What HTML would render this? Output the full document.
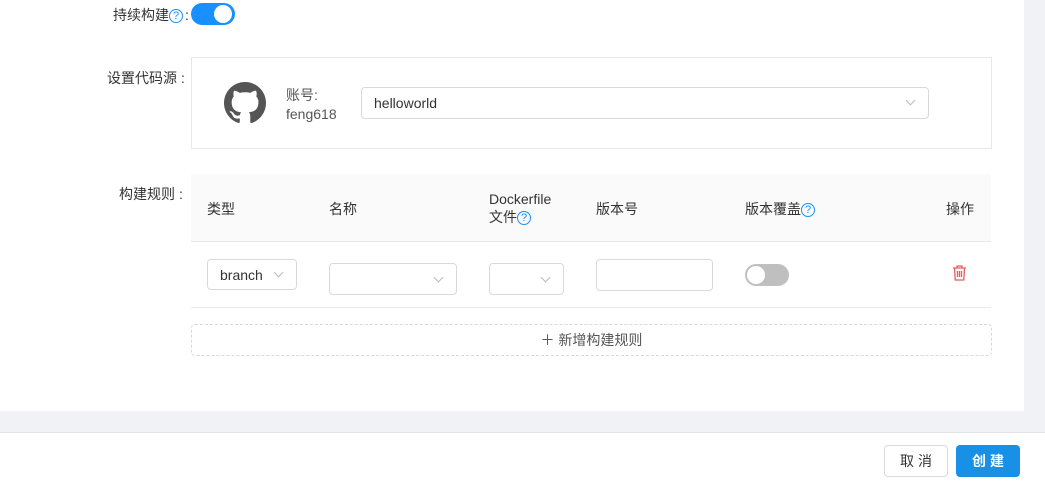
<!DOCTYPE html>
<html><head><meta charset="utf-8"><style>
*{box-sizing:border-box;margin:0;padding:0}
body{width:1045px;height:485px;overflow:hidden;background:#fff;font-family:"Liberation Sans","Noto Sans CJK SC",sans-serif;font-size:14px;color:#333;position:relative}
.a{position:absolute}
.grey{background:#f0f2f5}
.lbl{font-size:14px;color:#333}
.q{display:inline-block;width:14px;height:14px;border:1px solid #1890ff;border-radius:50%;color:#1890ff;font-size:11px;line-height:12px;text-align:center;vertical-align:1px}
.sel{border:1px solid #d9d9d9;border-radius:4px;background:#fff}
.chev{position:absolute;width:7px;height:7px;border-right:1px solid #bbb;border-bottom:1px solid #bbb;transform:rotate(45deg)}
.c{margin-left:4px}
</style></head><body>
<div class="a grey" style="left:1024px;top:0;width:21px;height:432px"></div>
<div class="a grey" style="left:0;top:411px;width:1045px;height:21px"></div>
<div class="a" style="left:0;top:432px;width:1045px;height:1px;background:#e4e4e4"></div>

<div class="a lbl" style="left:113px;top:5px">持续构建<span class="q">?</span><span style="margin-left:2px">:</span></div>
<div class="a" style="left:191px;top:3px;width:44px;height:22px;border-radius:11px;background:#1890ff"><div class="a" style="left:23px;top:2px;width:18px;height:18px;border-radius:50%;background:#fff"></div></div>

<div class="a lbl" style="left:107px;top:68px">设置代码源<span class="c">:</span></div>
<div class="a" style="left:191px;top:57px;width:801px;height:92px;border:1px solid #e8e8e8"></div>
<svg class="a" style="left:224px;top:82px" width="42" height="42" viewBox="0 0 16 16"><path fill="#555" d="M8 0C3.58 0 0 3.58 0 8c0 3.54 2.290 6.530 5.470 7.590.4.07.55-.17.55-.38v-1.33c-2.23.48-2.7-1.070-2.7-1.070-.36-.92-.89-1.17-.89-1.17-.73-.5.06-.49.06-.49.8.06 1.23.82 1.23.82.71 1.22 1.870.87 2.330.66.07-.52.28-.87.51-1.07-1.78-.2-3.64-.89-3.64-3.95 0-.87.31-1.59.82-2.15-.08-.2-.36-1.02.08-2.12 0 0 .67-.21 2.2.82.64-.18 1.32-.27 2-.27.68 0 1.36.09 2 .27 1.53-1.04 2.2-.82 2.2-.82.44 1.1.16 1.92.08 2.12.51.56.82 1.27.82 2.15 0 3.07-1.87 3.75-3.65 3.95.29.25.54.73.54 1.48v2.2c0 .21.15.46.55.38A8.013 8.013 0 0016 8c0-4.42-3.58-8-8-8z"/></svg>
<div class="a" style="left:286px;top:85px;color:#555">账号:</div>
<div class="a" style="left:286px;top:106px;color:#555">feng618</div>
<div class="a sel" style="left:361px;top:87px;width:568px;height:32px"><span class="a" style="left:12px;top:7px;color:#333">helloworld</span><span class="chev" style="right:14px;top:9px"></span></div>

<div class="a lbl" style="left:119px;top:184px">构建规则<span class="c">:</span></div>
<div class="a" style="left:191px;top:174px;width:800px;height:68px;background:#fafafa;border-bottom:1px solid #e8e8e8"></div>
<div class="a lbl" style="left:207px;top:199px">类型</div>
<div class="a lbl" style="left:329px;top:199px">名称</div>
<div class="a lbl" style="left:489px;top:190px;line-height:18px">Dockerfile<br>文件<span class="q">?</span></div>
<div class="a lbl" style="left:596px;top:199px">版本号</div>
<div class="a lbl" style="left:745px;top:199px">版本覆盖<span class="q">?</span></div>
<div class="a lbl" style="left:946px;top:199px">操作</div>

<div class="a sel" style="left:207px;top:259px;width:90px;height:31px"><span class="a" style="left:12px;top:7px">branch</span><span class="chev" style="left:67px;top:9px"></span></div>
<div class="a sel" style="left:329px;top:263px;width:128px;height:32px"><span class="chev" style="right:14px;top:10px"></span></div>
<div class="a sel" style="left:489px;top:263px;width:75px;height:32px"><span class="chev" style="right:14px;top:10px"></span></div>
<div class="a sel" style="left:596px;top:259px;width:117px;height:32px"></div>
<div class="a" style="left:745px;top:264px;width:44px;height:22px;border-radius:11px;background:#bfbfbf"><div class="a" style="left:2px;top:2px;width:18px;height:18px;border-radius:50%;background:#fff"></div></div>
<svg class="a" style="left:952px;top:265px" width="15" height="16" viewBox="0 0 15 16" fill="none" stroke="#e85c5c" stroke-width="1.3"><path d="M1 3h13M5 3V1h5v2M2.5 3l.7 12h8.6l.7-12M5.5 6v6M7.5 6v6M9.5 6v6"/></svg>
<div class="a" style="left:191px;top:307px;width:800px;height:1px;background:#e8e8e8"></div>

<div class="a" style="left:191px;top:324px;width:801px;height:32px;border:1px dashed #d9d9d9;border-radius:4px;text-align:center;line-height:30px;color:#555">＋ 新增构建规则</div>

<div class="a" style="left:884px;top:445px;width:64px;height:32px;border:1px solid #d9d9d9;border-radius:4px;text-align:center;line-height:30px;color:#333;letter-spacing:4px;padding-left:4px">取消</div>
<div class="a" style="left:956px;top:445px;width:64px;height:32px;background:#1890e6;border-radius:4px;text-align:center;line-height:32px;color:#fff;font-weight:bold;letter-spacing:4px;padding-left:4px">创建</div>
</body></html>
